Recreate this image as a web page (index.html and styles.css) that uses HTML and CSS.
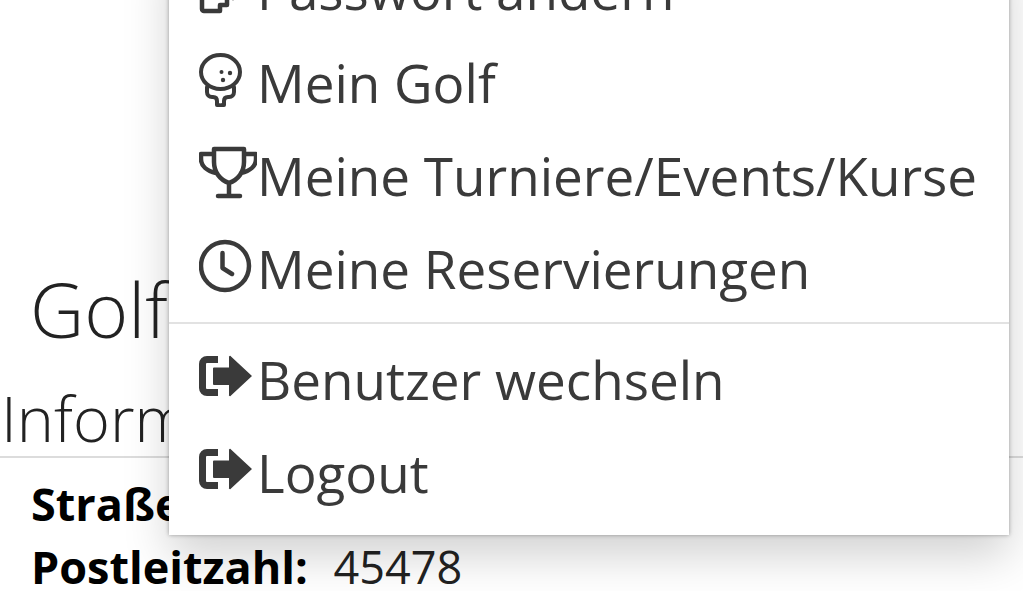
FILE: index.html
```html
<!DOCTYPE html>
<html lang="de">
<head>
    <meta charset="UTF-8">
    <meta name="viewport" content="width=device-width, initial-scale=1.0">
    <title>Golfclub - Mein Profil</title>
    <link rel="stylesheet" href="styles.css">
</head>
<body>

    <!-- Page content behind the menu -->
    <div class="main-content">
        <h1 class="club-title">Golfclub</h1>
        <h2 class="section-title">Informationen</h2>
        <div class="info-list">
            <p><strong>Straße:</strong></p>
            <p><strong>Postleitzahl:</strong> <span class="info-value">45478</span></p>
        </div>
    </div>

    <!-- Open user menu -->
    <ul class="user-menu">
        <li>
            <a href="#password">
                <svg class="menu-icon" viewBox="0 0 58 60"><path class="line heavy" d="M3 30v19a2 2 0 0 0 2 2h16v-6h7v-6M34 38v-5"/></svg>
                Passwort ändern
            </a>
        </li>
        <li>
            <a href="#golf">
                <svg class="menu-icon" viewBox="0 0 58 60">
                    <ellipse class="line" cx="21.500" cy="19" rx="19.500" ry="17"/>
                    <path class="line" d="M8 34v5c0 3 2 5 5 5h1c2 0 4 1 4 4v4h2M35 34v5c0 3-2 5-5 5h-1c-2 0-4 1-4 4v4h-2"/>
                    <circle class="dot" cx="22.500" cy="19" r="2"/>
                    <circle class="dot" cx="31" cy="20" r="2.200"/>
                    <circle class="dot" cx="24" cy="27" r="2.200"/>
                </svg>
                Mein Golf
            </a>
        </li>
        <li>
            <a href="#events">
                <svg class="menu-icon" viewBox="0 0 58 60">
                    <path class="line heavy" d="M15 3h30v13c0 10-6 18-15 21-9-3-15-11-15-21zM15 8H2v5c0 7 6 12 15 14M45 8h12v5c0 7-6 12-15 14M30 37v12"/>
                    <path class="line heavy" d="M19 50h22"/>
                </svg>
                Meine Turniere/Events/Kurse
            </a>
        </li>
        <li>
            <a href="#reservations">
                <svg class="menu-icon" viewBox="0 0 58 60">
                    <circle class="line heavy" cx="26" cy="27" r="24"/>
                    <path class="line heavy" d="M23.500 14v15l9.500 6"/>
                </svg>
                Meine Reservierungen
            </a>
        </li>
        <li class="divider"></li>
        <li>
            <a href="#switch">
                <svg class="menu-icon" viewBox="0 0 58 60">
                    <path class="line bracket" d="M19 9.500H8a4.500 4.500 0 0 0-4.500 4.500v24A4.500 4.500 0 0 0 8 42.500h11"/>
                    <path class="dot" d="M15 17.500h15V7.500a1 1 0 0 1 2-1l21 19.500-21 19.500a1 1 0 0 1-2-1V35H15a1 1 0 0 1-1-1V18.500a1 1 0 0 1 1-1z"/>
                </svg>
                Benutzer wechseln
            </a>
        </li>
        <li>
            <a href="index.html">
                <svg class="menu-icon" viewBox="0 0 58 60">
                    <path class="line bracket" d="M19 9.500H8a4.500 4.500 0 0 0-4.500 4.500v24A4.500 4.500 0 0 0 8 42.500h11"/>
                    <path class="dot" d="M15 17.500h15V7.500a1 1 0 0 1 2-1l21 19.500-21 19.500a1 1 0 0 1-2-1V35H15a1 1 0 0 1-1-1V18.500a1 1 0 0 1 1-1z"/>
                </svg>
                Logout
            </a>
        </li>
    </ul>

</body>
</html>
```

FILE: styles.css
```css
/* Reset and Basic Styles */
* {
    margin: 0;
    padding: 0;
    box-sizing: border-box;
}
html, body {
    height: 100%;
    overflow: hidden;
}
body {
    font-family: "Open Sans", "Noto Sans", sans-serif;
    background-color: #fff;
    color: #000;
    position: relative;
}

/* Page content */
.main-content {
    padding-top: 259px;
}
.club-title {
    font-size: 75px;
    font-weight: 300;
    line-height: 100px;
    padding-left: 30px;
    white-space: nowrap;
    color: #222;
}
.section-title {
    font-size: 63px;
    font-weight: 300;
    line-height: 76px;
    padding-left: 1px;
    border-bottom: 2px solid #dcdcdc;
    margin-top: 21px;
    color: #222;
}
.info-list {
    padding: 14px 31px 0;
    font-size: 45px;
    line-height: 63px;
}
.info-list strong {
    font-weight: 700;
}
.info-value {
    margin-left: 14px;
    color: #222;
}

/* User menu */
.user-menu {
    position: absolute;
    left: 169px;
    top: -57px;
    width: 840px;
    list-style: none;
    background-color: #fff;
    box-shadow: 0 0 4px rgba(0, 0, 0, 0.35), 0 21px 43px rgba(0, 0, 0, 0.18);
    padding-left: 30px;
}
.user-menu a {
    display: flex;
    align-items: center;
    height: 93px;
    font-size: 53px;
    color: #3a3a3a;
    text-decoration: none;
    white-space: nowrap;
}
.menu-icon {
    width: 58px;
    height: 60px;
    flex-shrink: 0;
}
.menu-icon .line {
    fill: none;
    stroke: #3a3a3a;
    stroke-width: 4;
    stroke-linecap: round;
    stroke-linejoin: round;
}
.menu-icon .heavy {
    stroke-width: 4.500;
}
.menu-icon .bracket {
    stroke-width: 7;
    stroke-linecap: butt;
}
.menu-icon .dot {
    fill: #3a3a3a;
}
.divider {
    height: 2px;
    background-color: #e2e2e2;
    margin: 7px 0 9px -30px;
}
.user-menu li:last-child {
    padding-bottom: 16px;
}
```
